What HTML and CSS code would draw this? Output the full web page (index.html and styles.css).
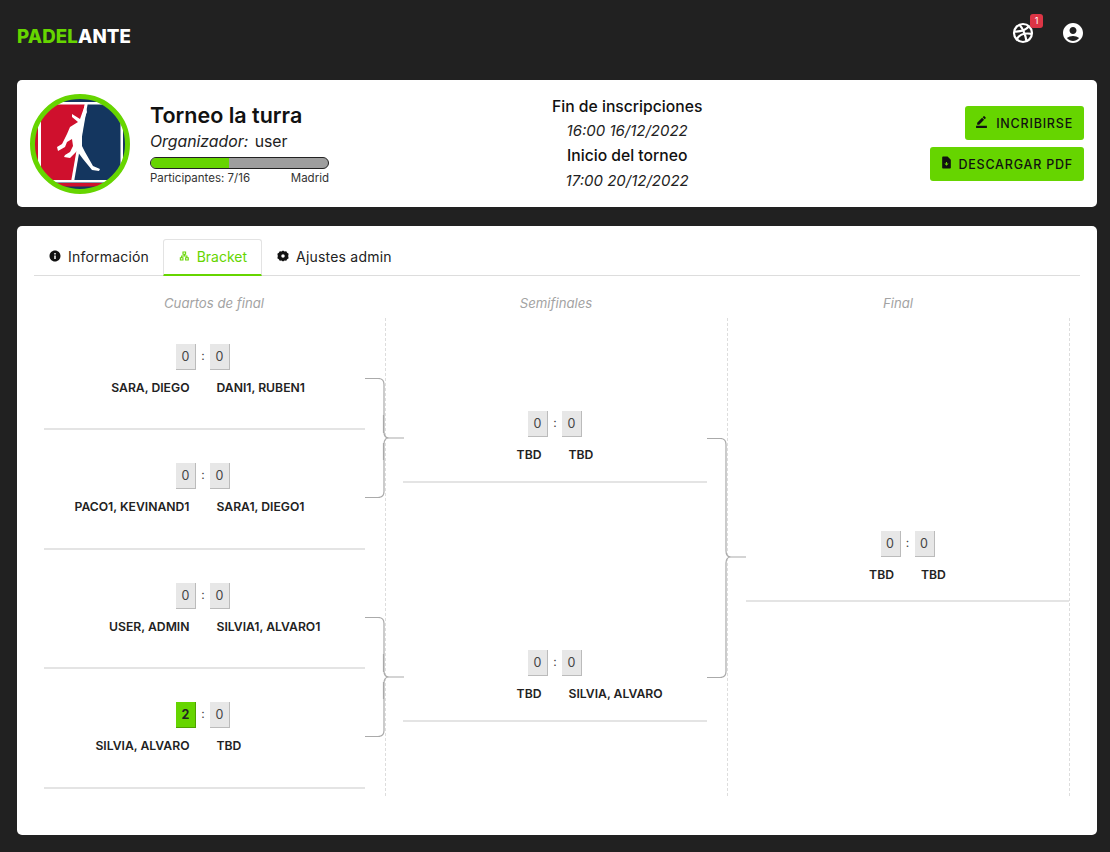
FILE: index.html
```html
<!DOCTYPE html>
<html lang="es">
<head>
    <meta charset="UTF-8">
    <meta name="viewport" content="width=device-width, initial-scale=1.0">
    <title>Padelante</title>
    <link rel="stylesheet" href="styles.css">
</head>
<body>
    <header class="navbar">
        <div class="brand"><span class="brand-green">PADEL</span>ANTE</div>
        <div class="nav-icons">
            <div class="nav-icon">
                <svg viewBox="0 0 24 24" width="24" height="24" fill="none" stroke="#fff" stroke-width="2.2">
                    <circle cx="12" cy="12" r="9"/>
                    <path d="M8.5 3.8c3 3.4 5.500 8 7 16.400M3.200 10.500c6 .4 11-.8 14.800-5.200M5.600 18.500c2.400-4.600 7-7 15.200-5.600"/>
                </svg>
                <span class="badge">1</span>
            </div>
            <div class="nav-icon">
                <svg viewBox="0 0 24 24" width="24" height="24" fill="#fff">
                    <path d="M12 2C6.48 2 2 6.48 2 12s4.48 10 10 10 10-4.48 10-10S17.52 2 12 2zm0 4c1.93 0 3.5 1.57 3.5 3.5S13.93 13 12 13s-3.5-1.57-3.5-3.5S10.07 6 12 6zm0 14c-2.03 0-4.43-.82-6.14-2.88C7.55 15.8 9.68 15 12 15s4.45.8 6.14 2.12C16.43 19.18 14.03 20 12 20z"/>
                </svg>
            </div>
        </div>
    </header>

    <section class="card tournament">
        <svg class="logo" viewBox="0 0 100 100">
            <clipPath id="logo-clip"><circle cx="50" cy="50" r="47"/></clipPath>
            <g clip-path="url(#logo-clip)">
                <path d="M0 0h100v100H0z" fill="#14365f"/>
                <path d="M0 89h100v3.500H0z" fill="#cf102d"/>
                <path d="M0 10h56L42 86H0z" fill="#cf102d"/>
                <path d="M0 8h100v2.500H0zM0 86h100v2.500H0zM8 8h3v80H8zM90.500 8h2.500v80h-2.500z" fill="#fff"/>
                <path d="M55 8h3L44 88h-3z" fill="#fff"/>
                <path d="M42 20L50 25 55 11 57 18 53 28 52 40 52 52 55 58 63 72 70 75 69 77 62 76 53 65 47 57 40 64 34 63 35 61 40 58 43 52 42 45 37 48 35 53 28 57 27 53 32 50 37 40 40 33 48 28 42 23z" fill="#fff"/>
            </g>
            <circle cx="50" cy="50" r="47.500" fill="none" stroke="#66d500" stroke-width="5"/>
        </svg>
        <div class="info">
            <h1>Torneo la turra</h1>
            <p class="organizer"><em>Organizador:</em> user</p>
            <div class="progress"><div class="progress-fill" style="width: 44%"></div></div>
            <div class="progress-labels">
                <span>Participantes: 7/16</span>
                <span>Madrid</span>
            </div>
        </div>
        <div class="dates">
            <h3>Fin de inscripciones</h3>
            <p class="date-first">16:00 16/12/2022</p>
            <h3>Inicio del torneo</h3>
            <p>17:00 20/12/2022</p>
        </div>
        <div class="actions">
            <button class="btn">
                <svg viewBox="0 0 24 24" width="13" height="13" fill="#111"><path d="M22 24H2v-4h20v4zM13.060 5.190l3.750 3.750L7.750 18H4v-3.750l9.060-9.060zm4.820 2.680-3.750-3.750 1.830-1.830c.39-.39 1.020-.39 1.410 0l2.340 2.340c.39.39.39 1.020 0 1.410l-1.830 1.830z"/></svg>
                <span class="btn-gap">INCRIBIRSE</span>
            </button>
            <button class="btn">
                <svg viewBox="0 0 24 24" width="13" height="13" fill="#111"><path d="M14 1H6C4.900 1 4 1.900 4 3v18c0 1.100.9 2 2 2h12c1.100 0 2-.9 2-2V7l-6-6z"/><path d="M12 18l-4-4h3v-3h2v3h3l-4 4z" fill="#66d500"/></svg>
                DESCARGAR PDF
            </button>
        </div>
    </section>

    <section class="card main-card">
        <nav class="tabs">
            <div class="tab">
                <svg viewBox="0 0 24 24" width="12" height="12" fill="#111"><path d="M12 1C5.900 1 1 5.900 1 12s4.900 11 11 11 11-4.900 11-11S18.100 1 12 1zm1.500 17h-3v-7h3v7zm0-9h-3V6h3v3z"/></svg>
                Información
            </div>
            <div class="tab tab-active">
                <svg viewBox="0 0 24 24" width="12" height="12" fill="none" stroke="#66d500" stroke-width="2.400"><path d="M9 3h6v5H9zM3 16h6v5H3zM15 16h6v5h-6zM12 8v4M6 16v-4h12v4"/></svg>
                Bracket
            </div>
            <div class="tab">
                <svg viewBox="0 0 24 24" width="12" height="12" fill="#111"><path d="M12 1l3 2 3.500-.5 1.800 3 3 1.800L22.500 11v2l.8 3.700-3 1.800-1.800 3-3.500-.5-3 2-3-2-3.500.5-1.800-3-3-1.800L1.500 13v-2l-.8-3.700 3-1.800 1.800-3L9 3l3-2zm0 7.500a3.500 3.500 0 100 7 3.500 3.500 0 000-7z"/></svg>
                Ajustes admin
            </div>
        </nav>

        <div class="round-titles">
            <span>Cuartos de final</span>
            <span>Semifinales</span>
            <span>Final</span>
        </div>

        <div class="bracket">
            <div class="round round-quarters">
                <div class="match">
                    <div class="score"><span class="goal">0</span><i>:</i><span class="goal">0</span></div>
                    <div class="teams"><span>SARA, DIEGO</span><span>DANI1, RUBEN1</span></div>
                    <svg class="brace" width="40" height="120" viewBox="0 0 40 120"><path d="M0 .5h13q6 0 6 6V54q0 6 5 6h15M24 60q-5 0-5 6v47.500q0 6-6 6H0M18.500 37v18M18.500 65v17"/></svg>
                </div>
                <div class="match">
                    <div class="score"><span class="goal">0</span><i>:</i><span class="goal">0</span></div>
                    <div class="teams"><span>PACO1, KEVINAND1</span><span>SARA1, DIEGO1</span></div>
                </div>
                <div class="match">
                    <div class="score"><span class="goal">0</span><i>:</i><span class="goal">0</span></div>
                    <div class="teams"><span>USER, ADMIN</span><span>SILVIA1, ALVARO1</span></div>
                    <svg class="brace" width="40" height="120" viewBox="0 0 40 120"><path d="M0 .5h13q6 0 6 6V54q0 6 5 6h15M24 60q-5 0-5 6v47.500q0 6-6 6H0M18.500 37v18M18.500 65v17"/></svg>
                </div>
                <div class="match">
                    <div class="score"><span class="goal goal-win">2</span><i>:</i><span class="goal">0</span></div>
                    <div class="teams"><span>SILVIA, ALVARO</span><span>TBD</span></div>
                </div>
            </div>
            <div class="round round-semis">
                <div class="match">
                    <div class="score"><span class="goal">0</span><i>:</i><span class="goal">0</span></div>
                    <div class="teams"><span>TBD</span><span>TBD</span></div>
                    <svg class="brace" width="40" height="240" viewBox="0 0 40 240"><path d="M0 .5h13q6 0 6 6V113q0 6 5 6h15M24 119q-5 0-5 6v108.500q0 6-6 6H0"/></svg>
                </div>
                <div class="match">
                    <div class="score"><span class="goal">0</span><i>:</i><span class="goal">0</span></div>
                    <div class="teams"><span>TBD</span><span>SILVIA, ALVARO</span></div>
                </div>
            </div>
            <div class="round round-final">
                <div class="match">
                    <div class="score"><span class="goal">0</span><i>:</i><span class="goal">0</span></div>
                    <div class="teams"><span>TBD</span><span>TBD</span></div>
                </div>
            </div>
        </div>
    </section>
</body>
</html>
```

FILE: styles.css
```css
/* general */
body {
    font-family: Inter, "Open Sans", sans-serif;
    background-color: #212121;
    color: #111;
    margin: 0;
    padding: 0 13px 17px 17px;
}

h1, h3, p {
    margin: 0;
}

/* navbar */
.navbar {
    height: 70px;
    display: flex;
    align-items: center;
    justify-content: space-between;
    padding-right: 12px;
}

.brand {
    color: #fff;
    font-size: 18.700px;
    font-weight: 800;
    letter-spacing: 0.1px;
    margin-top: 3px;
}

.brand-green {
    color: #66d500;
}

.nav-icons {
    display: flex;
    gap: 26px;
    margin-top: -4px;
}

.nav-icon {
    position: relative;
    width: 24px;
    height: 24px;
}

.badge {
    position: absolute;
    top: -7px;
    right: -8px;
    width: 13px;
    height: 14px;
    border-radius: 3px;
    background-color: #dc3545;
    color: #fff;
    font-size: 9px;
    text-align: center;
    line-height: 14px;
}

/* cards */
.card {
    background-color: #fff;
    border-radius: 5px;
    width: 1080px;
}

.tournament {
    margin-top: 10px;
    height: 127px;
    display: grid;
    grid-template-columns: 100px 179px 1fr auto;
    column-gap: 20px;
    align-items: center;
    padding: 0 13px;
    width: 1054px;
}

.logo {
    width: 100px;
    height: 100px;
}

.info {
    padding-bottom: 1px;
}

h1 {
    font-size: 21.500px;
    font-weight: 600;
    line-height: 28px;
}

.organizer {
    font-size: 15.800px;
    line-height: 24px;
    margin-top: 1px;
    color: #222;
    word-spacing: 2px;
}

.progress {
    height: 10px;
    margin-top: 3px;
    border: 1px solid #222;
    border-radius: 6px;
    background-color: #9e9e9e;
    overflow: hidden;
}

.progress-fill {
    height: 100%;
    background-color: #66d500;
}

.progress-labels {
    display: flex;
    justify-content: space-between;
    font-size: 11.500px;
    line-height: 16px;
    margin-top: 1px;
    color: #333;
}

.dates {
    text-align: center;
    padding-right: 5px;
}

.dates h3 {
    font-size: 15.700px;
    font-weight: 500;
    line-height: 24px;
}

.dates p {
    font-size: 15px;
    font-style: italic;
    line-height: 25px;
    color: #222;
}

.dates .date-first {
    line-height: 24px;
    margin-bottom: 1px;
}

.actions {
    display: flex;
    flex-direction: column;
    align-items: flex-end;
    gap: 7px;
}

.btn {
    display: flex;
    align-items: center;
    gap: 5px;
    height: 34px;
    padding: 0 11px 0 10px;
    border: none;
    border-radius: 3px;
    background-color: #66d500;
    color: #111;
    font-family: inherit;
    font-size: 12.500px;
    font-weight: 500;
    letter-spacing: 0.8px;
}

.btn svg {
    margin-top: -3px;
}

.btn-gap {
    margin-left: 3px;
}

/* tabs */
.main-card {
    margin-top: 19px;
    height: 609px;
    padding: 13px 17px 0;
    box-sizing: border-box;
}

.tabs {
    display: flex;
    height: 37px;
    box-sizing: border-box;
    border-bottom: 1px solid #ddd;
}

.tab {
    display: flex;
    align-items: center;
    gap: 7px;
    height: 36px;
    box-sizing: border-box;
    padding: 0 14px 2px 15px;
    font-size: 14px;
    letter-spacing: 0.2px;
    color: #222;
}

.tab-active {
    color: #66d500;
    border: 1px solid #e3e3e3;
    border-bottom: 2px solid #66d500;
    border-radius: 3px 3px 0 0;
    height: 37px;
    width: 99px;
    letter-spacing: 0;
}

/* bracket */
.round-titles {
    display: grid;
    grid-template-columns: repeat(3, 342px);
    margin-left: 9px;
    height: 42px;
    padding-top: 19px;
    box-sizing: border-box;
    font-size: 13.200px;
    font-style: italic;
    color: #a3a3a3;
    text-align: center;
}

.bracket {
    display: grid;
    grid-template-columns: repeat(3, 342px);
    margin-left: 10px;
    height: 478px;
}

.round {
    border-right: 1px dashed #ddd;
    box-sizing: border-box;
}

.round-quarters {
    padding: 0 20px 0 0;
}

.round-semis {
    padding: 0 20px 0 17px;
}

.round-final {
    padding: 0 0 0 18px;
}

.match {
    position: relative;
    box-sizing: border-box;
    border-bottom: 2px solid #e4e4e4;
}

.round-quarters .match {
    height: 119.670px;
    padding-top: 33px;
}

.round-quarters .match:first-child {
    height: 112px;
    padding-top: 26px;
}

.round-quarters .score,
.round-quarters .teams {
    padding-right: 3px;
}

.round-semis .match {
    height: 72px;
    margin-top: 93px;
}

.round-semis .match + .match {
    margin-top: 167px;
}

.round-final .match {
    height: 71px;
    margin-top: 213px;
}

.score {
    display: flex;
    justify-content: center;
    align-items: center;
    gap: 5px;
    height: 26px;
    font-size: 12px;
}

.score i {
    font-style: normal;
    width: 4px;
    text-align: center;
    margin-top: -3px;
    color: #444;
}

.goal {
    width: 20px;
    height: 26px;
    box-sizing: border-box;
    background-color: #e7e7e7;
    border-right: 1px solid #bbb;
    border-bottom: 1px solid #bbb;
    line-height: 25px;
    text-align: center;
    font-size: 12.500px;
    color: #444;
}

.goal-win {
    background-color: #66d500;
    border-color: #4da000;
    font-weight: 700;
    color: #222;
}

.teams {
    display: grid;
    grid-template-columns: 1fr 1fr;
    column-gap: 27px;
    margin-top: 9px;
    font-size: 12.200px;
    font-weight: 600;
    line-height: 18px;
    color: #222;
}

.teams span:first-child {
    text-align: right;
}

/* connectors */
.brace {
    position: absolute;
    left: 100%;
    top: 67.500px;
    fill: none;
    stroke: #aaa;
    stroke-width: 1.200;
}

.round-quarters .match:first-child .brace {
    top: 60px;
}

.round-semis .brace {
    top: 27px;
}
```
